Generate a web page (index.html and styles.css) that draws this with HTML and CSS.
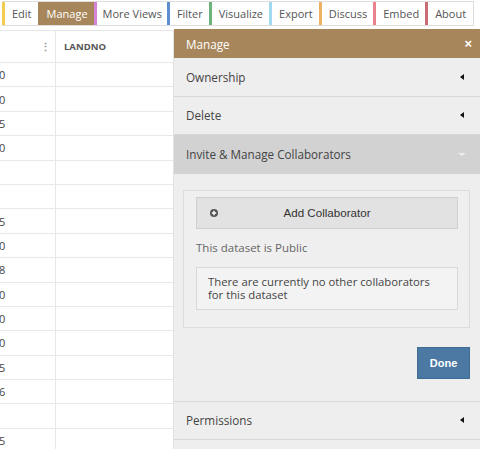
FILE: index.html
```html
<!DOCTYPE html>
<html>
<head>
<meta charset="utf-8">
<link rel="stylesheet" href="styles.css">
</head>
<body>
<div class="toolbar">
  <div class="tabs">
    <span class="tab t-edit">Edit</span>
    <span class="tab t-manage">Manage</span>
    <span class="tab t-views">More Views</span>
    <span class="tab t-filter">Filter</span>
    <span class="tab t-vis">Visualize</span>
    <span class="tab t-export">Export</span>
    <span class="tab t-discuss">Discuss</span>
    <span class="tab t-embed">Embed</span>
    <span class="tab t-about">About</span>
  </div>
</div>
<div class="main">
  <div class="grid">
    <div class="ghead"><div class="c1"><span class="dots">&#8942;</span></div><div class="c2">LANDNO</div></div>
    <div class="row"><div class="c1">0</div><div class="c2"></div></div>
    <div class="row"><div class="c1">0</div><div class="c2"></div></div>
    <div class="row"><div class="c1">5</div><div class="c2"></div></div>
    <div class="row"><div class="c1">0</div><div class="c2"></div></div>
    <div class="row"><div class="c1"></div><div class="c2"></div></div>
    <div class="row"><div class="c1"></div><div class="c2"></div></div>
    <div class="row"><div class="c1">5</div><div class="c2"></div></div>
    <div class="row"><div class="c1">0</div><div class="c2"></div></div>
    <div class="row"><div class="c1">8</div><div class="c2"></div></div>
    <div class="row"><div class="c1">0</div><div class="c2"></div></div>
    <div class="row"><div class="c1">0</div><div class="c2"></div></div>
    <div class="row"><div class="c1">0</div><div class="c2"></div></div>
    <div class="row"><div class="c1">5</div><div class="c2"></div></div>
    <div class="row"><div class="c1">6</div><div class="c2"></div></div>
    <div class="row"><div class="c1"></div><div class="c2"></div></div>
    <div class="row"><div class="c1">5</div><div class="c2"></div></div>
  </div>
  <div class="panel">
    <div class="phead"><span>Manage</span><span class="close">&#215;</span></div>
    <div class="sec"><span>Ownership</span><span class="arr-left"></span></div>
    <div class="sec"><span>Delete</span><span class="arr-left"></span></div>
    <div class="sec open"><span>Invite &amp; Manage Collaborators</span><span class="arr-down"></span></div>
    <div class="pbody">
      <div class="box">
        <div class="add">
          <svg class="plus" width="8" height="8" viewBox="0 0 8 8"><circle cx="4" cy="4" r="4" fill="#555"/><path d="M4 1.8V6.2M1.8 4H6.2" stroke="#fff" stroke-width="1.4"/></svg>
          <span class="addtext">Add Collaborator</span>
        </div>
        <p class="pub">This dataset is Public</p>
        <div class="msg">There are currently no other collaborators for this dataset</div>
      </div>
      <div class="actions"><span class="done">Done</span></div>
    </div>
    <div class="sec last"><span>Permissions</span><span class="arr-left"></span></div>
    <div class="rest"></div>
  </div>
</div>
</body>
</html>
```
FILE: styles.css
```css
html, body {
  margin: 0;
  padding: 0;
  background: #fff;
  font-family: "Open Sans", "Liberation Sans", sans-serif;
  color: #444;
  overflow: hidden;
}
.toolbar {
  padding: 1px 0 0 2px;
  height: 28px;
  box-sizing: border-box;
}
.tabs {
  display: flex;
  width: 472px;
  height: 25px;
  box-sizing: border-box;
  border: 1px solid #ddd;
  border-left: none;
  background: #fff;
  overflow: hidden;
}
.tab {
  display: flex;
  align-items: center;
  flex-shrink: 0;
  white-space: nowrap;
  padding: 0 6px 0 7px;
  font-size: 11px;
  color: #555;
  border-left: 3px solid #ccc;
  margin-top: -1px;
  margin-bottom: -1px;
}
.t-edit { border-left-color: #f2cd52; }
.t-manage { background: #a8865b; border-left-color: #a8865b; color: #fff; padding: 0 6px 0 6px; }
.t-views { border-left-color: #d583d8; padding: 0 5px 0 6px; }
.t-filter { border-left-color: #5b8fcf; }
.t-vis { border-left-color: #6db27a; }
.t-export { border-left-color: #a3d9f0; }
.t-discuss { border-left-color: #eeb163; }
.t-embed { border-left-color: #e8828a; }
.t-about { border-left-color: #c96b74; flex: 1; }
.main {
  display: flex;
  margin-top: 1px;
}
.grid {
  width: 173px;
  border-right: 1px solid #e2e2e2;
  border-top: 1px solid #e6e6e6;
  margin-top: 1px;
}
.ghead, .row {
  display: flex;
  box-sizing: border-box;
  border-bottom: 1px solid #e8e8e8;
}
.ghead { height: 32px; }
.row { height: 24.4px; }
.c1 {
  width: 55px;
  border-right: 1px solid #e8e8e8;
  display: flex;
  align-items: center;
  font-size: 11px;
  color: #444;
  text-indent: -1px;
}
.c2 {
  flex: 1;
  display: flex;
  align-items: center;
  padding-left: 8px;
  font-size: 9.5px;
  font-weight: bold;
  color: #555;
}
.dots {
  margin-left: 41px;
  color: #999;
  font-size: 11px;
  font-weight: bold;
}
.panel {
  flex: 1;
  background: #eeeeee;
  height: 421px;
  display: flex;
  flex-direction: column;
}
.phead {
  height: 29px;
  flex-shrink: 0;
  background: #a8865b;
  color: #fff;
  font-size: 11.7px;
  display: flex;
  align-items: center;
  justify-content: space-between;
  padding: 0 8px 0 12px;
}
.close {
  font-family: "Liberation Sans", sans-serif;
  font-weight: bold;
  font-size: 13px;
}
.sec {
  height: 38.5px;
  flex-shrink: 0;
  box-sizing: border-box;
  border-bottom: 1px solid #d8d8d8;
  display: flex;
  align-items: center;
  justify-content: space-between;
  padding: 0 16px 0 12px;
  font-size: 11.7px;
  color: #444;
}
.sec.open {
  background: #d2d2d2;
  border-bottom: none;
}
.arr-left {
  width: 0;
  height: 0;
  border-top: 3px solid transparent;
  border-bottom: 3px solid transparent;
  border-right: 4px solid #111;
}
.arr-down {
  width: 0;
  height: 0;
  border-left: 4px solid transparent;
  border-right: 4px solid transparent;
  border-top: 3px solid #eee;
  margin-right: -2px;
}
.pbody {
  height: 228px;
  flex-shrink: 0;
  box-sizing: border-box;
  border-bottom: 1px solid #d8d8d8;
  padding: 16px 10px 0 9px;
}
.box {
  border: 1px solid #dcdcdc;
  background: #efefef;
  padding: 6px 11px 17px 12px;
}
.add {
  height: 32px;
  box-sizing: border-box;
  border: 1px solid #cfcfcf;
  background: #e2e2e2;
  display: flex;
  align-items: center;
  padding-left: 13px;
}
.plus { display: block; }
.addtext {
  flex: 1;
  text-align: center;
  font-family: "Liberation Sans", sans-serif;
  font-size: 11.6px;
  color: #333;
  margin-left: -21px;
}
.pub {
  margin: 12px 0 12px 0;
  font-size: 11.5px;
  line-height: 14px;
  color: #666;
}
.msg {
  border: 1px solid #d8d8d8;
  background: #f3f3f3;
  padding: 7px 22px 8px 11px;
  font-size: 11.3px;
  line-height: 13px;
  color: #444;
}
.actions {
  display: flex;
  justify-content: flex-end;
  margin-top: 19px;
}
.done {
  width: 53px;
  height: 32px;
  box-sizing: border-box;
  background: #4b79a3;
  border: 1px solid #3f6c95;
  color: #fff;
  font-family: "Liberation Sans", sans-serif;
  font-weight: bold;
  font-size: 11px;
  display: flex;
  align-items: center;
  justify-content: center;
}
.sec.last { height: 38px; }
.rest { flex: 1; }
```
